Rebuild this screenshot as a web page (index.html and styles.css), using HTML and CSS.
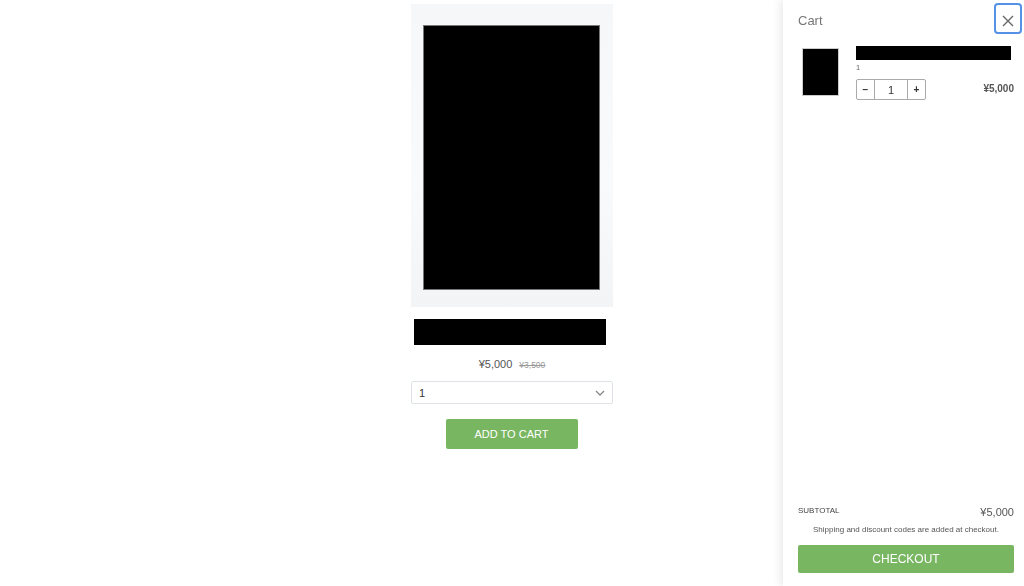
FILE: index.html
```html
<!DOCTYPE html>
<html>
<head>
<meta charset="utf-8">
<link rel="stylesheet" href="styles.css">
</head>
<body>
<main class="page">
  <div class="product">
    <div class="product-image"><div class="product-photo"></div></div>
    <div class="product-title"></div>
    <div class="price-row"><span class="price">¥5,000</span><span class="compare">¥3,500</span></div>
    <div class="select">
      <span>1</span>
      <svg width="10" height="6" viewBox="0 0 10 6"><path d="M1 1l4 4 4-4" fill="none" stroke="#888" stroke-width="1.3"/></svg>
    </div>
    <button class="add-btn">ADD TO CART</button>
  </div>
</main>
<aside class="cart">
  <div class="cart-head">
    <span class="cart-title">Cart</span>
    <button class="close">
      <svg width="12" height="12" viewBox="0 0 12 12"><path d="M1 1l10 10M11 1L1 11" stroke="#666" stroke-width="1.4"/></svg>
    </button>
  </div>
  <div class="item">
    <div class="thumb"></div>
    <div class="item-info">
      <div class="item-title"></div>
      <div class="item-variant">1</div>
      <div class="item-row">
        <div class="qty"><span class="qbtn">−</span><span class="qval">1</span><span class="qbtn">+</span></div>
        <span class="item-price">¥5,000</span>
      </div>
    </div>
  </div>
  <div class="cart-foot">
    <div class="subtotal"><span class="sub-label">SUBTOTAL</span><span class="sub-val">¥5,000</span></div>
    <p class="note">Shipping and discount codes are added at checkout.</p>
    <button class="checkout">CHECKOUT</button>
  </div>
</aside>
</body>
</html>
```

FILE: styles.css
```css
html, body { margin: 0; padding: 0; height: 100%; background: #fff; }
body { font-family: "Liberation Sans", Arial, sans-serif; color: #555; overflow: hidden; }
.page { display: flex; justify-content: center; padding-top: 4px; }
.product { width: 202px; display: flex; flex-direction: column; align-items: center; }
.product-image {
  width: 202px; height: 303px; box-sizing: border-box;
  background: linear-gradient(#f5f7f9, #f8fafb 60%, #f2f4f5);
  padding: 22px 14px 18px 13px;
}
.product-photo { width: 100%; height: 100%; background: #000; box-shadow: 0 0 0 1px #777; }
.product-title { align-self: flex-start; width: 192px; height: 26px; background: #000; margin-top: 12px; margin-left: 3px; }
.price-row { margin-top: 13px; display: flex; align-items: baseline; gap: 7px; height: 14px; }
.price { font-size: 11px; color: #555; }
.compare { font-size: 8.5px; color: #999; text-decoration: line-through; }
.select {
  margin-top: 9px; width: 202px; height: 23px; box-sizing: border-box;
  border: 1px solid #dfe3e8; border-radius: 2px;
  display: flex; align-items: center; justify-content: space-between;
  padding: 0 7px 0 7px; font-size: 11px; color: #333;
}
.add-btn {
  margin-top: 15px; margin-right: 1px; width: 132px; height: 30px; border: none; border-radius: 2px;
  background: #79b662; color: #fff; font-family: inherit; font-size: 11px;
}
.cart {
  position: fixed; top: 0; right: 0; bottom: 0; width: 241px; box-sizing: border-box;
  background: #fff; box-shadow: -2px 0 9px rgba(0,0,0,0.10);
  display: flex; flex-direction: column; padding: 3px 10px 13px 15px;
}
.cart-head { display: flex; justify-content: space-between; align-items: flex-start; margin-right: -8px; }
.cart-title { font-size: 13px; color: #777; margin-top: 10px; }
.close {
  width: 28px; height: 31px; box-sizing: border-box; border: 2px solid #5591e6; border-radius: 4px;
  background: #fff; padding: 5px 0 0; display: flex; align-items: center; justify-content: center;
}
.item { display: flex; margin-top: 12px; }
.thumb { width: 35px; height: 46px; background: #000; margin: 3px 0 0 5px; box-shadow: 0 0 0 1px #ccc; }
.item-info { flex: 1; margin-left: 18px; display: flex; flex-direction: column; }
.item-title { width: 155px; height: 14px; background: #000; }
.item-variant { font-size: 7.5px; color: #666; margin-top: 3px; height: 10px; }
.item-row { display: flex; justify-content: space-between; align-items: center; margin-top: 6px; }
.qty { display: flex; height: 21px; border: 1px solid #aaa; border-radius: 2px; box-sizing: border-box; }
.qbtn { width: 17px; display: flex; align-items: center; justify-content: center; font-size: 10px; color: #333; font-weight: bold; }
.qval { width: 32px; display: flex; align-items: center; justify-content: center; font-size: 11px; color: #333; border-left: 1px solid #aaa; border-right: 1px solid #aaa; }
.item-price { font-size: 10px; font-weight: bold; color: #555; margin-top: -2px; }
.cart-foot { margin-top: auto; }
.subtotal { display: flex; justify-content: space-between; align-items: flex-start; }
.sub-label { font-size: 8px; color: #444; margin-top: 1px; }
.sub-val { font-size: 11px; color: #555; margin-top: 1px; }
.note { margin: 7px 0 0; text-align: center; font-size: 8px; color: #555; }
.checkout {
  margin-top: 11px; width: 100%; height: 28px; border: none; border-radius: 2px;
  background: #79b662; color: #fff; font-family: inherit; font-size: 12px;
}
```
